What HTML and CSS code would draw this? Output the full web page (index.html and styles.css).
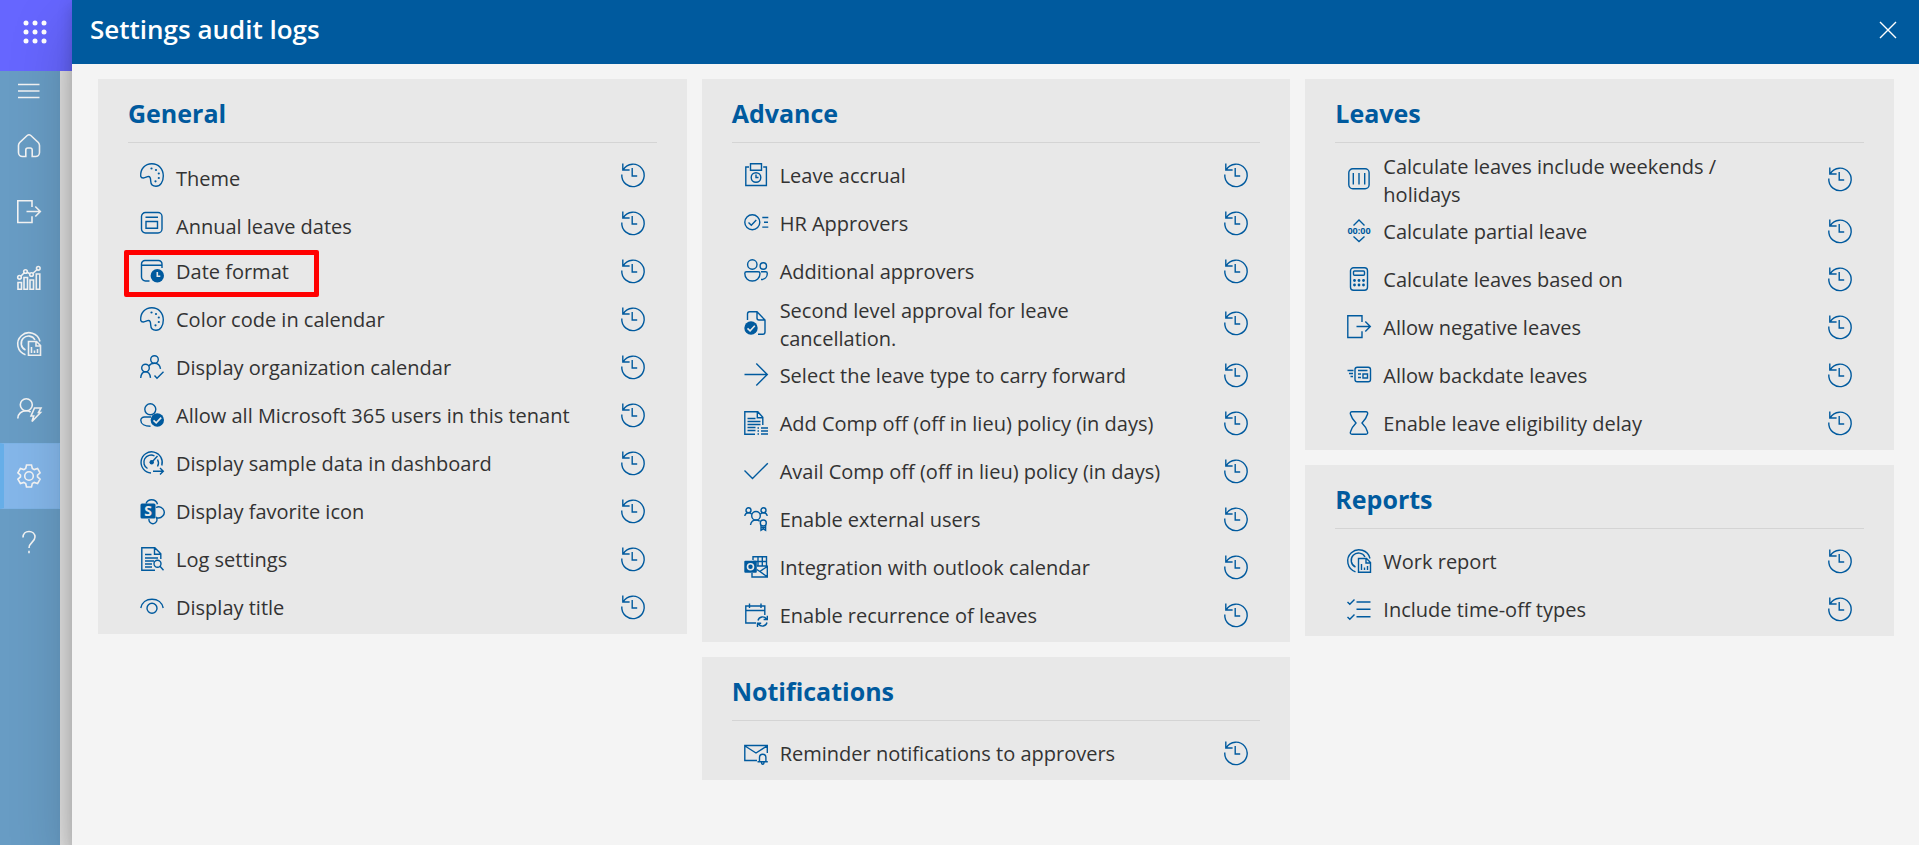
FILE: index.html
```html
<!DOCTYPE html>
<html lang="en">
<head>
<meta charset="utf-8">
<title>Settings audit logs</title>
<link rel="stylesheet" href="styles.css">
</head>
<body>
<svg class="sprite" aria-hidden="true">
  <symbol id="history" viewBox="0 0 24 24"><path d="M.8 11.5A11.2 11.2 0 1 0 2.3 6.7M1.8.5V7h6.8M11.2 5v8h5"/></symbol>
  <symbol id="palette" viewBox="0 0 24 24"><path d="M.7 13.2C.2 6 5 .7 11.8.7 18.6.7 23.3 5.8 23.3 13c0 6-3 10.300-7.300 10.300-3.600 0-5.200-2.200-5.300-5.300-.1-3-.7-5.300-3.200-4.300-2.200.9-5.800 2.800-6.800-.5z"/><g class="solid"><circle cx="11.500" cy="5.500" r="1.100"/><circle cx="16" cy="7" r="1.100"/><circle cx="18.800" cy="10.500" r="1.100"/><circle cx="18.800" cy="15" r="1.100"/><circle cx="15.500" cy="18.300" r="1.100"/></g></symbol>
  <symbol id="annual" viewBox="0 0 24 24"><rect x="1.500" y="1.500" width="20.500" height="20.500" rx="4"/><path d="M5.500 6.200H18M6 10.500h11.500v6.800H6z"/></symbol>
  <symbol id="dateclock" viewBox="0 0 24 24"><path d="M9.500 22H5.500a4 4 0 0 1-4-4V5a3.500 3.500 0 0 1 3.500-3.500h13.500A3.500 3.500 0 0 1 22 5v4M1.500 6.300H22"/><circle class="solid" cx="17.300" cy="16.800" r="6.700"/><path class="knock" d="M17.300 13v4.300h3"/></symbol>
  <symbol id="orgcheck" viewBox="0 0 24 24"><circle cx="14.500" cy="4.500" r="3.800"/><circle cx="5.500" cy="13" r="3.800"/><path d="M.7 23c.3-3.500 2-6.200 4.800-6.200s4.600 2.500 5 6M8.800 11c1.300-1.800 3.300-2.700 5.700-2.700 3.500 0 5.500 2.200 6 5.500M14.500 20.500l2.500 2.700 6.500-6.500"/></symbol>
  <symbol id="usercheck" viewBox="0 0 24 24"><circle cx="10.300" cy="6.300" r="5.500"/><path d="M11 14H4.500C2.300 14 .8 15.400.8 17.300c0 3.700 4 6 9.700 6"/><circle class="solid" cx="17.300" cy="17" r="6.700"/><path class="knock" d="M13.500 17.300l2.700 2.600 5-5.300"/></symbol>
  <symbol id="gauge" viewBox="0 0 24 24"><path d="M11 22A10.600 10.600 0 1 1 21.800 14.500M7.500 17.500A7 7 0 1 1 14.500 5M17.500 8.500a7 7 0 0 1 0 7M12 11l5.500-6M13 20.300h10M20 17l3.300 3.300L20 23.600"/><circle class="solid" cx="11.700" cy="11.300" r="2.200"/></symbol>
  <symbol id="logsearch" viewBox="0 0 24 24"><path d="M15 23.200H1.800V.8h13l6 6V12M14.500.8v6.500h6.300M5 7.500h6.500M5 11h13M5 14h9M5 17h7M5 20h7"/><circle cx="17.500" cy="16.800" r="3.500"/><path d="M20 19.300l3.500 3.900"/></symbol>
  <symbol id="eye" viewBox="0 0 24 24"><path d="M.8 13C1.800 7.500 6.300 4.200 12 4.200s10.200 3.300 11.200 8.800"/><circle cx="12" cy="13.200" r="5"/></symbol>
  <symbol id="accrual" viewBox="0 0 24 24"><path d="M5 4H1.800v18.500h20.600V4h-3.200M6.500.8h11v6.400h-11z"/><circle cx="12" cy="14.500" r="4.800"/><path d="M12 11.500v3h2.500"/></symbol>
  <symbol id="approvelist" viewBox="0 0 24 24"><circle cx="8.300" cy="11.300" r="7.500"/><path d="M4.500 11.500l2.800 2.700L12.300 9M18.300 6.500h6M20 11.300h4M18.300 16.100h6"/></symbol>
  <symbol id="people" viewBox="0 0 24 24"><circle cx="8.300" cy="5.500" r="4.700"/><circle cx="19.300" cy="7" r="3.200"/><path d="M2.500 12.800h11.700c1.200 0 1.800.8 1.800 1.700 0 4.500-3.500 7.500-7.700 7.500S.8 19 .8 14.500c0-.9.600-1.700 1.700-1.700zM17 12.800h4.700c1 0 1.600.7 1.600 1.700 0 3.500-2.500 6-6.300 6"/></symbol>
  <symbol id="doccheck" viewBox="0 0 24 24"><path d="M3.500 9V3c0-1.500.7-2.200 2-2.200H13L21 9v12c0 1.500-.8 2.300-2.200 2.300H14M13 .8V7c0 1.300.7 2 2 2h6"/><circle class="solid" cx="7" cy="17" r="6.700"/><path class="knock" d="M3.500 17.300l2.600 2.500 4.700-5"/></symbol>
  <symbol id="arrow" viewBox="0 0 24 24"><path d="M.5 11.500h22.800M12.300.5l11 11-11 11"/></symbol>
  <symbol id="doclist" viewBox="0 0 24 24"><path d="M11 23.200H.8V.8h13l5 5.500V14M13.300.8v6h5.500M3.500 7.500h8M3.500 10.500h13M3.500 13.500h13M3.500 16.500h8M3.500 19.500h8M13.500 17h1.500M17 17h7M13.500 20h1.500M17 20h7M13.500 23h1.500M17 23h7"/></symbol>
  <symbol id="check" viewBox="0 0 24 24"><path d="M.5 11.500l8 8L23.800 4.300"/></symbol>
  <symbol id="external" viewBox="0 0 24 24"><circle cx="4.500" cy="3.300" r="2.500"/><circle cx="19.500" cy="3.300" r="2.500"/><circle cx="12" cy="8.800" r="4.300"/><path d="M.8 9c.3-2 1.700-3.300 3.700-3.300 1.500 0 2.500.6 3.300 1.600M16.200 7.300c.8-1 1.800-1.600 3.300-1.600 2 0 3.400 1.300 3.700 3.300M6.500 18c.5-3 2.600-5 5.500-5 1.500 0 2.700.4 3.700 1.300"/><circle cx="19.300" cy="16" r="3"/><path d="M17 18v5.300l2.300-1.500 2.300 1.500V18M17 20.500h4.600"/></symbol>
  <symbol id="outlook" viewBox="0 0 24 24"><path d="M9 5V1.800h13.500V13M8 18v4h15.300V11.500l-7.500 5-3-2M14 2v9M18.300 2v9M9 6.500h13.500M13 11h9.500M15.800 16.500l7.500 5.300"/><rect class="solid" x=".3" y="5.800" width="12.500" height="12" rx="1"/><circle class="knock" cx="6.500" cy="11.800" r="3"/></symbol>
  <symbol id="recur" viewBox="0 0 24 24"><path d="M12 20H1.800V3h19v9M1.800 7.500h19M5.500.5V5M17 .5V5M14 17.500a4.700 4.700 0 0 1 8.500-1.500M23.300 12.800v3.700h-3.700M23 19.500a4.700 4.700 0 0 1-8.500 1.500M13.500 24v-3.700h3.700"/></symbol>
  <symbol id="mailbell" viewBox="0 0 24 24"><path d="M13 19.500H.8v-15h22.500V12M1 5l11 7 11-7M13.500 20.800h10.300M15.500 20.500v-4c0-2 1.300-3.200 3.200-3.200s3.200 1.200 3.200 3.200v4M17.500 21c0 3 2.500 3 2.500 0"/></symbol>
  <symbol id="columns" viewBox="0 0 24 24"><rect x="1.800" y="1.800" width="20.300" height="20" rx="4"/><path d="M6.300 6v11.500M12 6v11.500M17.700 6v11.500"/></symbol>
  <symbol id="calc" viewBox="0 0 24 24"><rect x="3.500" y=".8" width="17" height="22.400" rx="3"/><rect x="6.500" y="4" width="11" height="4.300" rx="1"/><g class="solid"><circle cx="7.500" cy="13.500" r="1.400"/><circle cx="12" cy="13.500" r="1.400"/><circle cx="16.500" cy="13.500" r="1.400"/><circle cx="7.500" cy="18" r="1.400"/><circle cx="12" cy="18" r="1.400"/><circle cx="16.500" cy="18" r="1.400"/></g></symbol>
  <symbol id="exit" viewBox="0 0 24 24"><path d="M15 7V.8H.8v21.700H15v-6.200M9.500 11.500h13.800M18.300 6.500l5 5-5 5"/></symbol>
  <symbol id="backdate" viewBox="0 0 24 24"><rect x="8" y="4.300" width="15.500" height="14.500" rx="2.300"/><path d="M.5 7.500h6M2 10.500h4M3.500 13.500h2.500M11 7.500h9.500M11 11h3M11 14.500h3M16 11h4.500v4H16z"/></symbol>
  <symbol id="hourglass" viewBox="0 0 24 24"><path d="M5 .8h14c1.500 0 2 1 1.500 2.500-1 3.500-2.500 5.700-5.500 8.700 3 3 4.500 5.200 5.500 8.700.5 1.500 0 2.500-1.500 2.500H5c-1.500 0-2-1-1.500-2.500C4.500 17.200 6 15 9 12 6 9 4.500 6.800 3.500 3.300 3 1.800 3.500.8 5 .8z"/></symbol>
  <symbol id="report" viewBox="0 0 24 24"><path d="M8.500 22.800A11.300 11.300 0 1 1 23 9.500M8.500 18A7.300 7.300 0 1 1 18 8"/><path d="M11.500 9.500h8l4 4v9.800h-12zM19 9.500v4.500h4.500M14.500 15v6M17.500 18.500V21M20.500 17v4"/></symbol>
  <symbol id="checklist" viewBox="0 0 24 24"><path d="M.5 5l2.300 2.300L7.500 2.500M.5 20l2.300 2.300 4.700-4.800M9.500 5h14M9.500 12.300h14M9.500 19.700h14"/></symbol>
  <symbol id="home" viewBox="0 0 24 24"><path d="M8.800 22.500H5.500a4 4 0 0 1-4-4v-7c0-1.300.3-2 1.200-3l7.500-7c1.200-1 2.400-1 3.600 0l7.500 7c.9 1 1.200 1.700 1.200 3v7a4 4 0 0 1-4 4h-3.300V16c0-1.200-.7-2-2-2h-2.400c-1.300 0-2 .8-2 2z"/></symbol>
  <symbol id="chart" viewBox="0 0 24 24"><path d="M1 16.500h3.500v6.700H1zM7 11.500h3.500v11.700H7zM13 14h3.500v9.200H13zM19.300 8h3.500v15.200h-3.500zM4 10l3.500-3.500M9.800 6l3.400 2M15.800 7.500l4.300-4"/><circle cx="2.500" cy="11.300" r="1.800"/><circle cx="8.500" cy="5.500" r="1.800"/><circle cx="14.500" cy="8.500" r="1.800"/><circle cx="21.300" cy="2.300" r="1.800"/></symbol>
  <symbol id="userflash" viewBox="0 0 24 24"><circle cx="9.300" cy="6.800" r="6"/><path d="M.8 20.500c0-4.500 3.700-7.700 8.500-7.700 1.700 0 3 .4 4.300 1.200M17.500 10H24l-2.500 4.500h2L15 23.500l1.700-5.500H14z"/></symbol>
  <symbol id="gear" viewBox="0 0 24 24"><circle cx="12" cy="12" r="4.300"/><path d="M9.500 1h5l.8 3.500 1.900 1.100 3.400-1.100 2.500 4.300-2.600 2.400v1.600l2.600 2.400-2.500 4.300-3.400-1.100-1.900 1.100-.8 3.500h-5l-.8-3.500-1.900-1.100-3.400 1.100L.9 15.200l2.600-2.400v-1.600L.9 8.800l2.500-4.300 3.400 1.100 1.900-1.100z"/></symbol>
  <symbol id="help" viewBox="0 0 24 24"><path d="M6 7.500C6 4 8.500 1.500 12 1.500s6 2.300 6 5.500c0 4.800-6 5.500-6 11M12 20.800v2.400"/></symbol>
  <symbol id="menu" viewBox="0 0 24 24"><path d="M1 5.500h21.500M1 12h21.500M1 18.500h21.500"/></symbol>
  <symbol id="close" viewBox="0 0 24 24"><path d="M4 4l16 16M20 4L4 20"/></symbol>
  <symbol id="waffle" viewBox="0 0 24 24"><g class="solid"><circle cx="3" cy="3" r="2.500"/><circle cx="12" cy="3" r="2.500"/><circle cx="21" cy="3" r="2.500"/><circle cx="3" cy="12" r="2.500"/><circle cx="12" cy="12" r="2.500"/><circle cx="21" cy="12" r="2.500"/><circle cx="3" cy="21" r="2.500"/><circle cx="12" cy="21" r="2.500"/><circle cx="21" cy="21" r="2.500"/></g></symbol>
</svg>

<div class="app">
  <div class="rail">
    <button class="launcher" aria-label="App launcher"><svg class="icon"><use href="#waffle"/></svg></button>
    <nav class="nav" aria-label="Main">
      <button class="nav-toggle" aria-label="Menu"><svg class="icon"><use href="#menu"/></svg></button>
      <a class="nav-link" href="#home" aria-label="Home"><svg class="icon"><use href="#home"/></svg></a>
      <a class="nav-link" href="#leave" aria-label="Leave"><svg class="icon"><use href="#exit"/></svg></a>
      <a class="nav-link" href="#charts" aria-label="Charts"><svg class="icon"><use href="#chart"/></svg></a>
      <a class="nav-link" href="#reports" aria-label="Reports"><svg class="icon"><use href="#report"/></svg></a>
      <a class="nav-link" href="#users" aria-label="Users"><svg class="icon"><use href="#userflash"/></svg></a>
      <a class="nav-link nav-link-active" href="#settings" aria-label="Settings" aria-current="page"><svg class="icon"><use href="#gear"/></svg></a>
      <a class="nav-link" href="#help" aria-label="Help"><svg class="icon"><use href="#help"/></svg></a>
    </nav>
  </div>

  <main class="panel">
    <header class="panel-header">
      <h1 class="panel-title">Settings audit logs</h1>
      <button class="close" aria-label="Close"><svg class="icon"><use href="#close"/></svg></button>
    </header>
    <div class="columns">
      <div class="column">
        <section class="card">
          <h2 class="card-title">General</h2>
          <ul class="list">
            <li class="item item-low"><svg class="icon"><use href="#palette"/></svg><span class="label">Theme</span><button class="history" aria-label="Theme history"><svg class="icon"><use href="#history"/></svg></button></li>
            <li class="item item-low"><svg class="icon"><use href="#annual"/></svg><span class="label">Annual leave dates</span><button class="history" aria-label="Annual leave dates history"><svg class="icon"><use href="#history"/></svg></button></li>
            <li class="item item-marked"><svg class="icon"><use href="#dateclock"/></svg><span class="label">Date format</span><button class="history" aria-label="Date format history"><svg class="icon"><use href="#history"/></svg></button></li>
            <li class="item"><svg class="icon"><use href="#palette"/></svg><span class="label">Color code in calendar</span><button class="history" aria-label="Color code in calendar history"><svg class="icon"><use href="#history"/></svg></button></li>
            <li class="item"><svg class="icon"><use href="#orgcheck"/></svg><span class="label">Display organization calendar</span><button class="history" aria-label="Display organization calendar history"><svg class="icon"><use href="#history"/></svg></button></li>
            <li class="item"><svg class="icon"><use href="#usercheck"/></svg><span class="label">Allow all Microsoft 365 users in this tenant</span><button class="history" aria-label="Microsoft 365 users history"><svg class="icon"><use href="#history"/></svg></button></li>
            <li class="item"><svg class="icon"><use href="#gauge"/></svg><span class="label">Display sample data in dashboard</span><button class="history" aria-label="Display sample data history"><svg class="icon"><use href="#history"/></svg></button></li>
            <li class="item"><svg class="icon" viewBox="0 0 24 24"><path d="M6 4.500C7.200 2 9 .8 11.500.8c3 0 5.300 1.800 6 4.500M16 8.500a5.500 5.500 0 1 1-.3 9.500M9 20a4 4 0 1 0 7.300-1.500"/><rect class="solid" x=".5" y="4.500" width="15" height="15" rx="1.500"/><text class="letter" x="8" y="17">S</text></svg><span class="label">Display favorite icon</span><button class="history" aria-label="Display favorite icon history"><svg class="icon"><use href="#history"/></svg></button></li>
            <li class="item"><svg class="icon"><use href="#logsearch"/></svg><span class="label">Log settings</span><button class="history" aria-label="Log settings history"><svg class="icon"><use href="#history"/></svg></button></li>
            <li class="item"><svg class="icon"><use href="#eye"/></svg><span class="label">Display title</span><button class="history" aria-label="Display title history"><svg class="icon"><use href="#history"/></svg></button></li>
          </ul>
        </section>
      </div>

      <div class="column">
        <section class="card">
          <h2 class="card-title">Advance</h2>
          <ul class="list">
            <li class="item"><svg class="icon"><use href="#accrual"/></svg><span class="label">Leave accrual</span><button class="history" aria-label="Leave accrual history"><svg class="icon"><use href="#history"/></svg></button></li>
            <li class="item"><svg class="icon"><use href="#approvelist"/></svg><span class="label">HR Approvers</span><button class="history" aria-label="HR Approvers history"><svg class="icon"><use href="#history"/></svg></button></li>
            <li class="item"><svg class="icon"><use href="#people"/></svg><span class="label">Additional approvers</span><button class="history" aria-label="Additional approvers history"><svg class="icon"><use href="#history"/></svg></button></li>
            <li class="item item-tall"><svg class="icon"><use href="#doccheck"/></svg><span class="label">Second level approval for leave cancellation.</span><button class="history" aria-label="Second level approval history"><svg class="icon"><use href="#history"/></svg></button></li>
            <li class="item"><svg class="icon"><use href="#arrow"/></svg><span class="label">Select the leave type to carry forward</span><button class="history" aria-label="Carry forward history"><svg class="icon"><use href="#history"/></svg></button></li>
            <li class="item"><svg class="icon"><use href="#doclist"/></svg><span class="label">Add Comp off (off in lieu) policy (in days)</span><button class="history" aria-label="Add Comp off history"><svg class="icon"><use href="#history"/></svg></button></li>
            <li class="item"><svg class="icon"><use href="#check"/></svg><span class="label">Avail Comp off (off in lieu) policy (in days)</span><button class="history" aria-label="Avail Comp off history"><svg class="icon"><use href="#history"/></svg></button></li>
            <li class="item"><svg class="icon"><use href="#external"/></svg><span class="label">Enable external users</span><button class="history" aria-label="Enable external users history"><svg class="icon"><use href="#history"/></svg></button></li>
            <li class="item"><svg class="icon"><use href="#outlook"/></svg><span class="label">Integration with outlook calendar</span><button class="history" aria-label="Outlook integration history"><svg class="icon"><use href="#history"/></svg></button></li>
            <li class="item"><svg class="icon"><use href="#recur"/></svg><span class="label">Enable recurrence of leaves</span><button class="history" aria-label="Enable recurrence history"><svg class="icon"><use href="#history"/></svg></button></li>
          </ul>
        </section>
        <section class="card">
          <h2 class="card-title">Notifications</h2>
          <ul class="list">
            <li class="item"><svg class="icon"><use href="#mailbell"/></svg><span class="label">Reminder notifications to approvers</span><button class="history" aria-label="Reminder notifications history"><svg class="icon"><use href="#history"/></svg></button></li>
          </ul>
        </section>
      </div>

      <div class="column">
        <section class="card">
          <h2 class="card-title">Leaves</h2>
          <ul class="list">
            <li class="item item-tall"><svg class="icon"><use href="#columns"/></svg><span class="label">Calculate leaves include weekends / holidays</span><button class="history" aria-label="Weekends and holidays history"><svg class="icon"><use href="#history"/></svg></button></li>
            <li class="item"><svg class="icon" viewBox="0 0 24 24"><text class="digits" x="12" y="15">00:00</text><path d="M6.500 6.500L12 1l5.500 5.500M6.500 17.500l5.500 5 5.500-5"/></svg><span class="label">Calculate partial leave</span><button class="history" aria-label="Calculate partial leave history"><svg class="icon"><use href="#history"/></svg></button></li>
            <li class="item"><svg class="icon"><use href="#calc"/></svg><span class="label">Calculate leaves based on</span><button class="history" aria-label="Calculate leaves based on history"><svg class="icon"><use href="#history"/></svg></button></li>
            <li class="item"><svg class="icon"><use href="#exit"/></svg><span class="label">Allow negative leaves</span><button class="history" aria-label="Allow negative leaves history"><svg class="icon"><use href="#history"/></svg></button></li>
            <li class="item"><svg class="icon"><use href="#backdate"/></svg><span class="label">Allow backdate leaves</span><button class="history" aria-label="Allow backdate leaves history"><svg class="icon"><use href="#history"/></svg></button></li>
            <li class="item"><svg class="icon"><use href="#hourglass"/></svg><span class="label">Enable leave eligibility delay</span><button class="history" aria-label="Enable leave eligibility delay history"><svg class="icon"><use href="#history"/></svg></button></li>
          </ul>
        </section>
        <section class="card">
          <h2 class="card-title">Reports</h2>
          <ul class="list">
            <li class="item"><svg class="icon"><use href="#report"/></svg><span class="label">Work report</span><button class="history" aria-label="Work report history"><svg class="icon"><use href="#history"/></svg></button></li>
            <li class="item"><svg class="icon"><use href="#checklist"/></svg><span class="label">Include time-off types</span><button class="history" aria-label="Include time-off types history"><svg class="icon"><use href="#history"/></svg></button></li>
          </ul>
        </section>
      </div>
    </div>
  </main>
</div>
</body>
</html>
```
FILE: styles.css
```css
*,
*::after { box-sizing: border-box; }

body {
  margin: 0;
  background: #f4f4f4;
  color: #333;
  font-family: "Open Sans", "Noto Sans", sans-serif;
  font-size: 20px;
  line-height: 28px;
}

button {
  padding: 0;
  border: 0;
  background: none;
  color: inherit;
  font: inherit;
  cursor: pointer;
}

.sprite {
  position: absolute;
  width: 0;
  height: 0;
}

.icon {
  flex: none;
  display: block;
  width: 24px;
  height: 24px;
  overflow: visible;
  fill: none;
  stroke: currentColor;
  stroke-width: 1.4;
}

symbol { overflow: visible; }

.solid {
  fill: currentColor;
  stroke: none;
}

.knock {
  stroke: #e8e8e8;
  stroke-width: 1.6;
}

.letter {
  fill: #e8e8e8;
  stroke: none;
  font-size: 14px;
  font-weight: 700;
  text-anchor: middle;
}

.digits {
  fill: currentColor;
  stroke: none;
  font-size: 9px;
  font-weight: 700;
  text-anchor: middle;
}

.app {
  display: flex;
  min-height: 100vh;
}

.rail {
  flex: none;
  display: flex;
  flex-direction: column;
  width: 72px;
  background: #e1e1e1;
}

.launcher {
  display: flex;
  align-items: center;
  height: 71px;
  padding: 0 0 7px 23px;
  background: #66f;
  color: #fff;
}

.nav {
  flex: 1;
  width: 60px;
  background: #689cc4;
  color: #f4f4f4;
}

.nav .icon { stroke-width: 1.6; }

.nav-toggle {
  display: flex;
  align-items: center;
  width: 100%;
  height: 42px;
  padding: 0 0 3px 17px;
}

.nav-link {
  display: flex;
  align-items: center;
  height: 66px;
  padding-left: 16px;
  border: 1px solid transparent;
  color: inherit;
}

.nav-link-active {
  padding-left: 13px;
  border-color: #7db3e6;
  border-left: 4px solid #66aee8;
  background: #84b6e9;
}

.panel {
  position: relative;
  flex: 1;
  min-width: 0;
  background: #f4f4f4;
  box-shadow: 0 26px 58px rgba(0, 0, 0, .22), 0 5px 14px rgba(0, 0, 0, .18);
}

.panel-header {
  display: flex;
  align-items: center;
  justify-content: space-between;
  height: 64px;
  padding: 0 19px 4px 18px;
  background: #005a9e;
  color: #fff;
}

.panel-title {
  margin: 0;
  padding-bottom: 2px;
  font-size: 26px;
  font-weight: 600;
}

.columns {
  display: grid;
  grid-template-columns: repeat(3, minmax(0, 1fr));
  align-items: start;
  gap: 15px;
  padding: 15px 25px 25px 26px;
}

.column {
  display: grid;
  gap: 15px;
}

.card {
  padding: 0 30px 3px;
  background: #e8e8e8;
}

.card-title {
  height: 64px;
  margin: 0;
  padding-top: 20px;
  border-bottom: 1px solid #d4d4d4;
  color: #005a9e;
  font-size: 25px;
  font-weight: 700;
}

.list {
  margin: 0;
  padding: 8px 0 0;
  list-style: none;
}

.item {
  display: flex;
  align-items: center;
  gap: 12px;
  min-height: 48px;
  padding: 0 12px;
  color: #005a9e;
}

.label {
  flex: 0 1 400px;
  padding-top: 2px;
  color: #333;
}

.item-low .label { padding-top: 8px; }

.item-tall .label { margin-bottom: -2px; }

.history { margin-left: auto; }

.item-marked { position: relative; }

.item-marked::after {
  content: "";
  position: absolute;
  top: 3px;
  left: -4px;
  width: 195px;
  height: 47px;
  border: 5px solid #f00;
  border-radius: 2px;
  pointer-events: none;
}
```
